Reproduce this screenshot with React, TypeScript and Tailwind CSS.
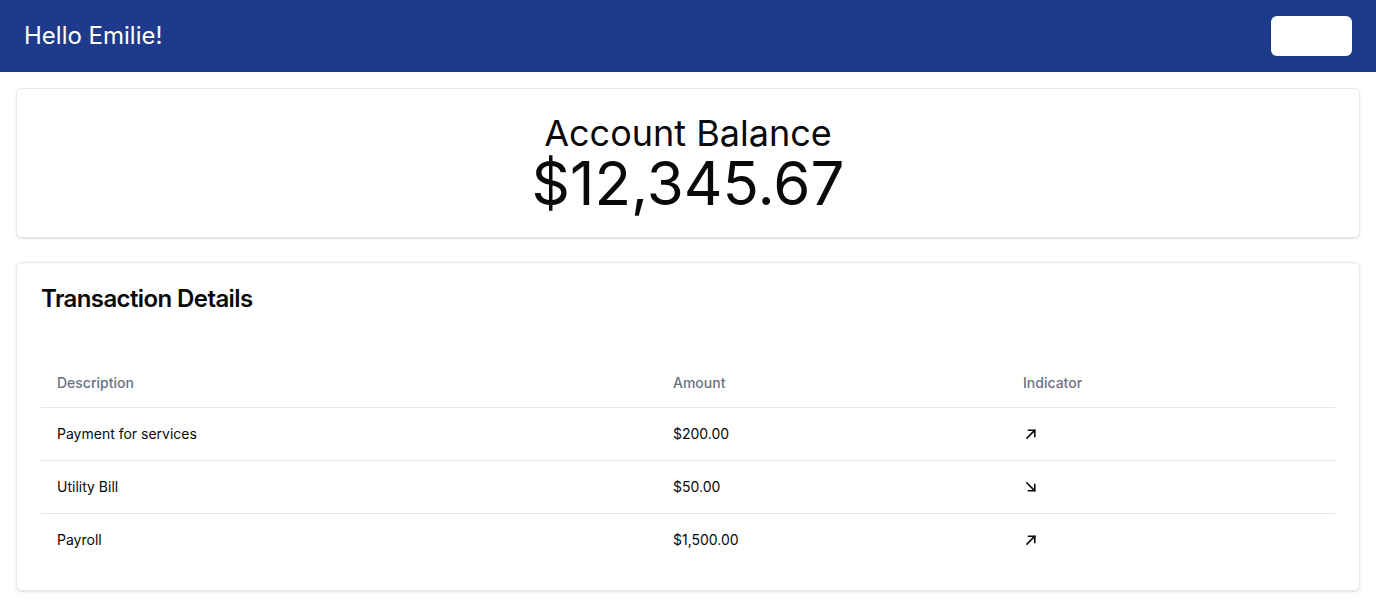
import React from "react";

const rows = [
  { d: "Payment for services", a: "$200.00", up: true },
  { d: "Utility Bill", a: "$50.00", up: false },
  { d: "Payroll", a: "$1,500.00", up: true },
];

function Arrow({ up }: { up: boolean }) {
  return (
    <svg width="12" height="12" viewBox="0 0 12 12" className="ml-0.5 block" fill="none" stroke="#09090b" strokeWidth="1.6" strokeLinecap="square">
      {up ? (
        <>
          <path d="M2 10 L9.5 2.5" />
          <path d="M3.5 2.2 H9.8 V8.5" />
        </>
      ) : (
        <>
          <path d="M2 2 L9.5 9.5" />
          <path d="M3.5 9.8 H9.8 V3.5" />
        </>
      )}
    </svg>
  );
}

export default function App() {
  return (
    <div className="min-h-[607px] bg-white text-[#09090b]" style={{ fontFamily: "Inter, 'Noto Sans', sans-serif" }}>
      <header className="h-[72px] bg-[#1e3a8a] px-6 flex items-center justify-between">
        <h1 className="text-2xl text-white">Hello Emilie!</h1>
        <button className="w-[81px] h-10 rounded-md bg-white"></button>
      </header>
      <main className="px-4 pt-4 flex flex-col gap-6">
        <div className="rounded-md border border-gray-200 shadow-sm bg-white p-6 flex flex-col items-center">
          <div className="text-4xl leading-10">Account Balance</div>
          <div className="text-6xl leading-[60px]">$12,345.67</div>
        </div>
        <div className="rounded-md border border-gray-200 shadow-sm bg-white p-6">
          <h2 className="text-2xl font-semibold leading-none tracking-tight">Transaction Details</h2>
          <div className="mt-12">
            <table className="w-full text-sm">
              <thead>
                <tr className="border-b border-gray-200">
                  <th className="h-12 px-4 text-left font-medium text-gray-500 w-[616px]">Description</th>
                  <th className="h-12 px-4 text-left font-medium text-gray-500 w-[350px]">Amount</th>
                  <th className="h-12 px-4 text-left font-medium text-gray-500">Indicator</th>
                </tr>
              </thead>
              <tbody>
                {rows.map((r, i) => (
                  <tr key={i} className={i < rows.length - 1 ? "border-b border-gray-200" : ""}>
                    <td className="p-4">{r.d}</td>
                    <td className="p-4">{r.a}</td>
                    <td className="p-4">
                      <Arrow up={r.up} />
                    </td>
                  </tr>
                ))}
              </tbody>
            </table>
          </div>
        </div>
      </main>
    </div>
  );
}
